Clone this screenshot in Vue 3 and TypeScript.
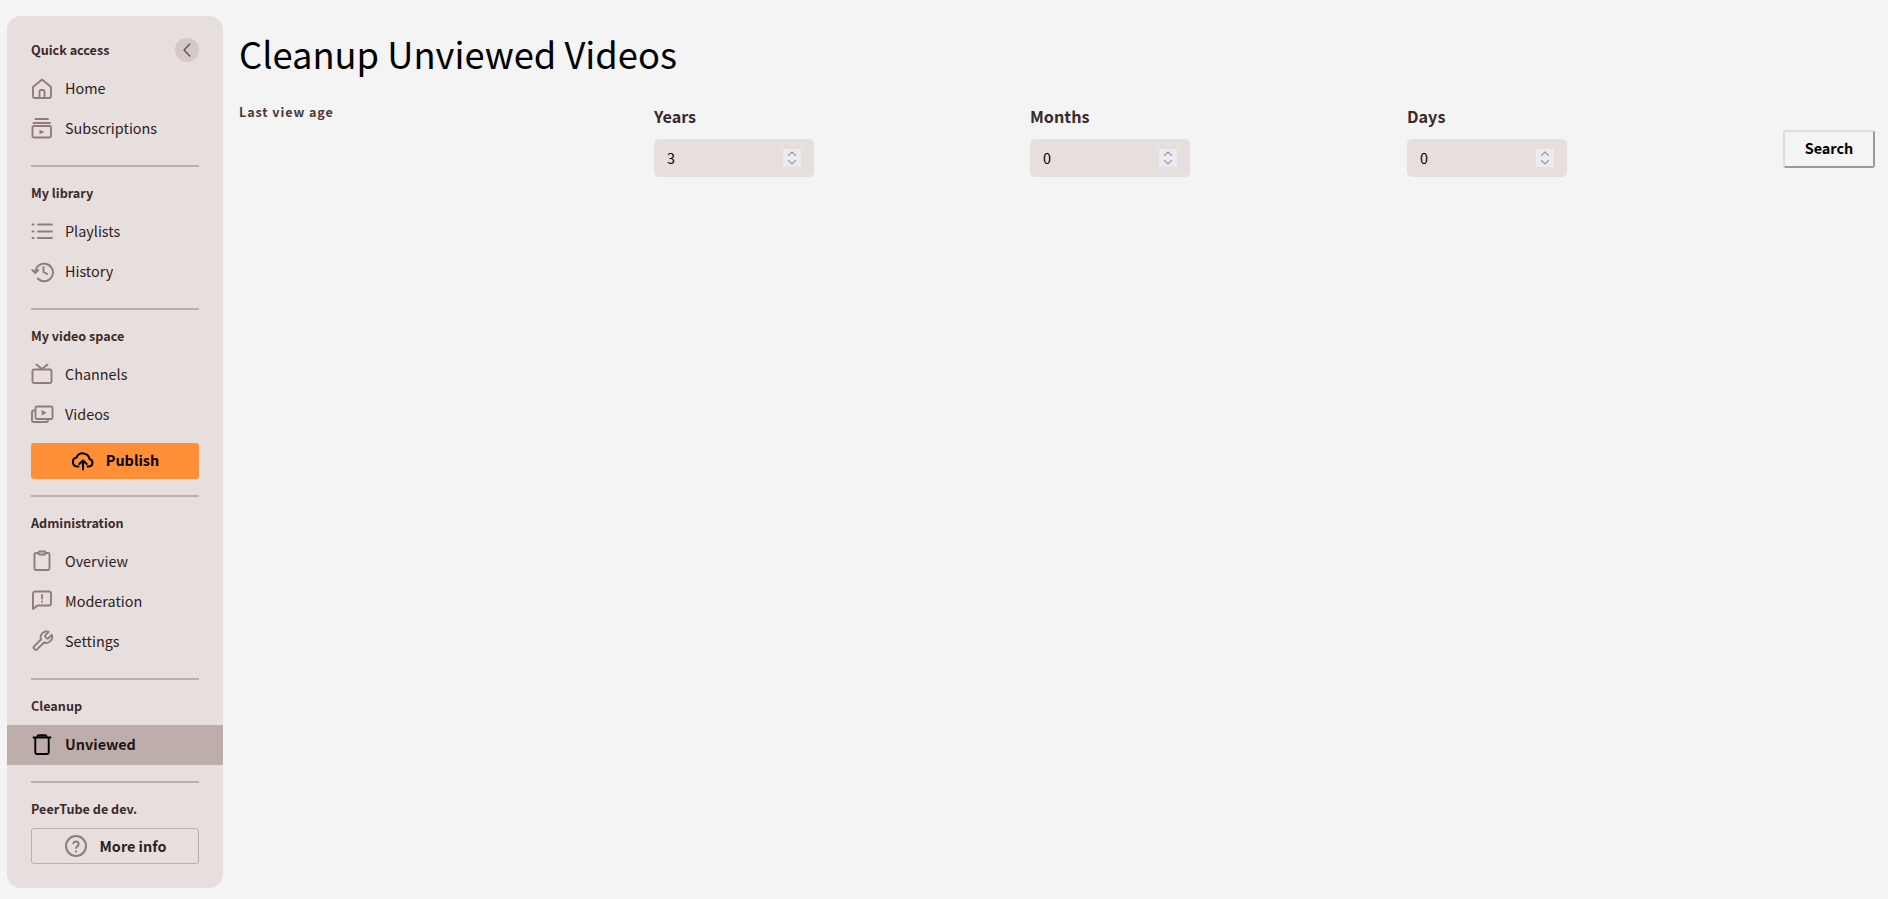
<script setup lang="ts">
interface Item { label: string; icon: string; active?: boolean }
interface Section { title: string; items: Item[] }

const top: Section[] = [
  { title: 'Quick access', items: [{ label: 'Home', icon: 'home' }, { label: 'Subscriptions', icon: 'subs' }] },
  { title: 'My library', items: [{ label: 'Playlists', icon: 'list' }, { label: 'History', icon: 'history' }] }
]
const space: Section = { title: 'My video space', items: [{ label: 'Channels', icon: 'tv' }, { label: 'Videos', icon: 'videos' }] }
const admin: Section[] = [
  { title: 'Administration', items: [{ label: 'Overview', icon: 'clip' }, { label: 'Moderation', icon: 'mod' }, { label: 'Settings', icon: 'wrench' }] },
  { title: 'Cleanup', items: [{ label: 'Unviewed', icon: 'trash', active: true }] }
]
const fields = [
  { label: 'Years', value: 3 },
  { label: 'Months', value: 0 },
  { label: 'Days', value: 0 }
]
const icons: Record<string, string> = {
  home: 'M2 10 11 2.500l9 7.500v9a2 2 0 0 1-2 2H4a2 2 0 0 1-2-2zM8.500 21v-6.500a1.500 1.500 0 0 1 1.500-1.500h2a1.500 1.500 0 0 1 1.500 1.500V21',
  subs: 'M4.500 2h12.500M2.500 6h16.500M3 9h15.500A1.500 1.500 0 0 1 20 10.500v8.500a1.500 1.500 0 0 1-1.500 1.500H3A1.500 1.500 0 0 1 1.500 19v-8.500A1.500 1.500 0 0 1 3 9z',
  list: 'M7 4.500h14M7 11.500h14M7 18h14M1.500 4.500h1M1.500 11.500h1M1.500 18h1',
  history: 'M1.300 10l3 3 3-3M4.300 12.500A8.800 8.800 0 1 1 6.700 18.500M12.500 7v5l3.500 2',
  tv: 'M3 6.500h16a1.500 1.500 0 0 1 1.500 1.500v10.500A1.500 1.500 0 0 1 19 20H3a1.500 1.500 0 0 1-1.500-1.500V8A1.500 1.500 0 0 1 3 6.500zM5.500 1.500 11 6l5.500-4.500',
  videos: 'M6 3.500h14A1.500 1.500 0 0 1 21.500 5v9.500A1.500 1.500 0 0 1 20 16H6a1.500 1.500 0 0 1-1.500-1.500V5A1.500 1.500 0 0 1 6 3.500zM4.500 7.500H2.500A1.500 1.500 0 0 0 1 9v8.500A1.500 1.500 0 0 0 2.500 19H15.500a1.500 1.500 0 0 0 1.500-1.500V16',
  clip: 'M7 4H5a1.500 1.500 0 0 0-1.500 1.500v14A1.500 1.500 0 0 0 5 21h12a1.500 1.500 0 0 0 1.500-1.500v-14A1.500 1.500 0 0 0 17 4h-2M8.500 2.500h5a1 1 0 0 1 1 1v1a1 1 0 0 1-1 1h-5a1 1 0 0 1-1-1v-1a1 1 0 0 1 1-1z',
  mod: 'M20 14.500a2 2 0 0 1-2 2H6.500l-4.500 3.500V4.500a2 2 0 0 1 2-2H18a2 2 0 0 1 2 2zM11 6v3.500M11 12.500v.2',
  wrench: 'M14.200 6.300a1 1 0 0 0 0 1.400l1.600 1.600a1 1 0 0 0 1.400 0l3.500-3.500a6 6 0 0 1-7.700 7.700l-6.700 6.700a2.120 2.120 0 0 1-3-3l6.700-6.700a6 6 0 0 1 7.700-7.700z',
  trash: 'M2.500 4.500h17M6.500 4.500V3.500a1.200 1.200 0 0 1 1.200-1.200h6.600a1.200 1.200 0 0 1 1.200 1.200v1M4.300 4.500v15A1.500 1.500 0 0 0 5.800 21h10.400a1.500 1.500 0 0 0 1.500-1.500v-15'
}
</script>

<template>
  <div class="page">
    <aside class="side">
      <section v-for="(s, i) in top" :key="s.title" class="group">
        <div class="title-row">
          <h4 class="sec">{{ s.title }}</h4>
          <button v-if="i === 0" class="collapse" aria-label="Collapse">
            <svg width="14" height="14" viewBox="0 0 14 14" fill="none" stroke="#5c4545" stroke-width="1.200" stroke-linecap="round" stroke-linejoin="round"><path d="M9.800 1 4 7l5.800 6" /></svg>
          </button>
        </div>
        <a v-for="it in s.items" :key="it.label" class="item">
          <svg class="ico" viewBox="0 0 24 24"><path :d="icons[it.icon]" /><path v-if="it.icon === 'subs'" class="fill" d="M8.500 12.500l5 2.400-5 2.400z" /></svg>
          <span class="lbl">{{ it.label }}</span>
        </a>
      </section>

      <section class="group publish-group">
        <div class="title-row"><h4 class="sec">{{ space.title }}</h4></div>
        <a v-for="it in space.items" :key="it.label" class="item">
          <svg class="ico" viewBox="0 0 24 24"><path :d="icons[it.icon]" /><path v-if="it.icon === 'videos'" class="fill" d="M10.700 7l5 2.700-5 2.700z" /></svg>
          <span class="lbl">{{ it.label }}</span>
        </a>
        <button class="publish">
          <svg width="24" height="24" viewBox="0 0 24 24" fill="none" stroke="#000" stroke-width="2" stroke-linecap="round" stroke-linejoin="round">
            <path d="M12 20.500v-9M8.300 15 12 11.500l3.700 3.500" />
            <path d="M7.500 17.500H6a4.500 4.500 0 0 1-.5-8.900 6.800 6.800 0 0 1 13 1.400 3.800 3.800 0 0 1-.5 7.500h-1.500" />
          </svg>
          <span class="lbl">Publish</span>
        </button>
      </section>

      <section v-for="s in admin" :key="s.title" class="group">
        <div class="title-row"><h4 class="sec">{{ s.title }}</h4></div>
        <a v-for="it in s.items" :key="it.label" class="item" :class="{ active: it.active }">
          <svg class="ico" viewBox="0 0 24 24"><path :d="icons[it.icon]" /></svg>
          <span class="lbl">{{ it.label }}</span>
        </a>
      </section>

      <section class="group last">
        <div class="title-row"><h4 class="sec">PeerTube de dev.</h4></div>
        <button class="more">
          <svg width="24" height="24" viewBox="0 0 24 24" fill="none" stroke="#8f7c7c" stroke-width="2" stroke-linecap="round"><circle cx="12" cy="12" r="10" /><path d="M9.300 9.300a2.800 2.800 0 0 1 5.400 1c0 1.800-2.700 2.300-2.700 3.700M12 17.300v.1" /></svg>
          <span class="lbl">More info</span>
        </button>
      </section>
    </aside>

    <main class="main">
      <h1>Cleanup Unviewed Videos</h1>
      <form class="form" @submit.prevent>
        <div class="caption">Last view age</div>
        <label v-for="f in fields" :key="f.label" class="field">
          <span class="field-label">{{ f.label }}</span>
          <span class="num">
            <input type="number" min="0" :value="f.value" />
            <span class="spin">
              <svg width="18" height="18" viewBox="0 0 18 18" fill="none" stroke="#9a98a4" stroke-width="1.100" stroke-linecap="round" stroke-linejoin="round"><path d="M5.500 6.500 9 3l3.500 3.500M5.500 11.500 9 15l3.500-3.500" /></svg>
            </span>
          </span>
        </label>
        <button class="search" type="submit"><span class="lbl">Search</span></button>
      </form>
    </main>
  </div>
</template>

<style>
html, body { margin: 0; background: #f4f4f4; }
</style>

<style scoped>
.page {
  display: flex;
  height: 899px;
  box-sizing: border-box;
  padding: 16px 13px 0 7px;
  gap: 16px;
  font-family: "Noto Sans CJK SC", "Noto Sans", sans-serif;
  color: #2d2121;
}
.side {
  width: 216px;
  height: 871.500px;
  flex: none;
  background: #e7dfde;
  border-radius: 14px;
  box-sizing: border-box;
  padding-top: 16px;
  overflow: hidden;
}
.group {
  padding-bottom: 18.500px;
  margin-bottom: 8px;
  position: relative;
}
.group::after {
  content: "";
  position: absolute;
  left: 24px;
  right: 24px;
  bottom: 0;
  height: 2px;
  background: #bdaeac;
}
.group.last { margin: 0; padding: 0; }
.group.last::after { display: none; }
.title-row {
  display: flex;
  align-items: center;
  justify-content: space-between;
  height: 36.500px;
  padding: 0 24px;
}
.sec {
  margin: 0 0 1px;
  font-size: 12.600px;
  font-weight: 700;
  color: #3a2a2a;
}
.collapse {
  width: 24px;
  height: 24px;
  border: 0;
  padding: 0;
  border-radius: 50%;
  background: #d5c9c8;
  display: flex;
  align-items: center;
  justify-content: center;
}
.item {
  display: flex;
  align-items: center;
  height: 40px;
  padding-left: 24px;
  gap: 10px;
  font-size: 14.400px;
  color: #2d2121;
}
.lbl { margin-bottom: 2px; display: block; }
.item.active {
  background: #bdaeac;
  font-weight: 700;
  color: #1f1616;
  margin: 0.500px 0 -0.500px;
}
.ico {
  width: 24px;
  height: 24px;
  flex: none;
  fill: none;
  stroke: #8f7c7c;
  stroke-width: 1.900;
  stroke-linecap: round;
  stroke-linejoin: round;
}
.ico .fill { fill: #8f7c7c; stroke: none; }
.active .ico { stroke: #000; }
.publish {
  display: flex;
  align-items: center;
  justify-content: center;
  gap: 11px;
  width: 168px;
  height: 36px;
  margin: 8px 24px 0;
  padding: 0;
  border: 0;
  border-radius: 3px;
  background: #ff8f37;
  color: #000;
  font: 700 14.400px "Noto Sans CJK SC", "Noto Sans", sans-serif;
}
.publish-group { padding-bottom: 18px; }
.more {
  display: flex;
  align-items: center;
  justify-content: center;
  gap: 12px;
  width: 168px;
  height: 36px;
  margin: 1px 24px 0;
  padding: 0;
  box-sizing: border-box;
  border: 1px solid #bdaeac;
  border-radius: 3px;
  background: transparent;
  color: #2d2121;
  font: 700 14.400px "Noto Sans CJK SC", "Noto Sans", sans-serif;
}
.main { flex: 1; min-width: 0; }
h1 {
  margin: 9px 0 0;
  font-size: 36.300px;
  font-weight: 400;
  line-height: 56px;
  color: #000;
}
.form {
  display: grid;
  grid-template-columns: 415px 376px 377px 376px 1fr;
  margin-top: 21px;
  align-items: start;
}
.caption {
  font-size: 12.600px;
  font-weight: 700;
  letter-spacing: 0.900px;
  color: #4a3838;
  line-height: 20px;
}
.field {
  display: flex;
  flex-direction: column;
  gap: 11px;
  align-items: flex-start;
  margin-top: 2px;
}
.field-label {
  font-size: 16.200px;
  font-weight: 700;
  line-height: 24px;
  color: #3a2a2a;
}
.num { position: relative; display: block; width: 160px; height: 38px; }
input {
  display: block;
  width: 100%;
  height: 100%;
  box-sizing: border-box;
  padding: 0 13px 2px;
  border: 0;
  border-radius: 5px;
  background: #e7dfde;
  color: #000;
  font: 400 14.400px "Noto Sans CJK SC", "Noto Sans", sans-serif;
  outline: none;
  appearance: textfield;
}
input::-webkit-inner-spin-button,
input::-webkit-outer-spin-button { appearance: none; margin: 0; }
.spin {
  position: absolute;
  right: 13px;
  top: 10px;
  width: 18px;
  height: 18px;
  background: #ecebef;
}
.spin svg { display: block; }
.search {
  justify-self: end;
  width: 92px;
  height: 37.500px;
  margin-top: 28px;
  padding: 0;
  box-sizing: border-box;
  background: #f4f4f4;
  border: 2px solid #dedede;
  border-right-color: #999;
  border-bottom-color: #999;
  border-radius: 3px;
  color: #000;
  font: 700 14.400px "Noto Sans CJK SC", "Noto Sans", sans-serif;
}
</style>
